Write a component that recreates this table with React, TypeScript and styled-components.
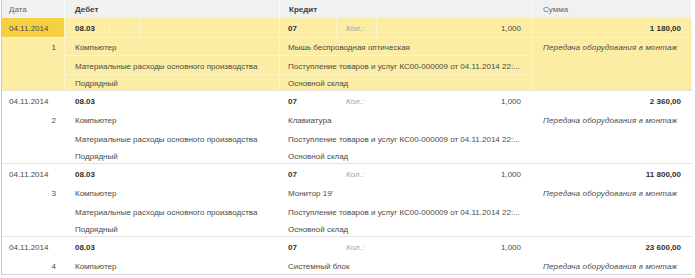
import React from "react";
import styled, { createGlobalStyle, css } from "styled-components";

const Global = createGlobalStyle`
  html, body { margin: 0; padding: 0; background: #ffffff; }
  body { font-family: "Liberation Sans", Arial, sans-serif; }
`;

const LINE_SEL = "#fcf3c6";

const Table = styled.div`
  margin-left: 1px;
  width: 691px;
  height: 275px;
  box-sizing: border-box;
  border-left: 1px solid #c9c9c9;
  border-bottom: 1px solid #d2d2d2;
  overflow: hidden;
  font-size: 8px;
  color: #4a4a4a;
`;

const COLS = "63px 45px 31px 139px 57px 40px 155px 1fr";

const Header = styled.div`
  display: grid;
  grid-template-columns: ${COLS};
  height: 18px;
  background: #f1f1f1;
`;

const HeadCell = styled.div<{ $span: string; $bold?: boolean; $pad: number }>`
  grid-column: ${(p) => p.$span};
  display: flex;
  align-items: center;
  padding-left: ${(p) => p.$pad}px;
  padding-top: 1px;
  box-sizing: border-box;
  border-right: 1px solid #fafafa;
  color: ${(p) => (p.$bold ? "#3c3c3c" : "#666666")};
  font-weight: ${(p) => (p.$bold ? 700 : 400)};
  white-space: nowrap;
`;

const Group = styled.div<{ $selected?: boolean }>`
  display: grid;
  grid-template-columns: ${COLS};
  grid-template-rows: 19px 18px 19px 16px;
  border-bottom: 1px solid #e2e2e2;
  background: ${(p) => (p.$selected ? "#fbeda3" : "#ffffff")};
`;

type CellProps = {
  $col: string;
  $row: string;
  $sel?: boolean;
  $align?: "left" | "right";
  $pl?: number;
  $pr?: number;
  $bold?: boolean;
  $italic?: boolean;
  $muted?: boolean;
  $top?: boolean;
  $current?: boolean;
  $valign?: "center" | "start";
};

const Cell = styled.div<CellProps>`
  grid-column: ${(p) => p.$col};
  grid-row: ${(p) => p.$row};
  display: flex;
  align-items: ${(p) => (p.$valign === "start" ? "flex-start" : "center")};
  justify-content: ${(p) => (p.$align === "right" ? "flex-end" : "flex-start")};
  box-sizing: border-box;
  padding-left: ${(p) => p.$pl ?? 10}px;
  padding-right: ${(p) => p.$pr ?? 8}px;
  padding-top: ${(p) => (p.$valign === "start" ? 5 : 2)}px;
  white-space: nowrap;
  overflow: hidden;
  min-width: 0;
  border-right: 1px solid ${(p) => (p.$sel ? LINE_SEL : "transparent")};
  ${(p) =>
    p.$top &&
    css`
      border-top: 1px solid ${p.$sel ? LINE_SEL : "transparent"};
    `}
  background: ${(p) => (p.$current ? "#f5d043" : "transparent")};
  font-weight: ${(p) => (p.$bold ? 700 : 400)};
  font-style: ${(p) => (p.$italic ? "italic" : "normal")};
  letter-spacing: ${(p) => (p.$italic && !p.$muted ? "0.15px" : "normal")};
  color: ${(p) => (p.$muted ? "#a3a3a3" : p.$bold ? "#2f2f2f" : "#4a4a4a")};
`;

type Entry = {
  date: string;
  n: number;
  debAcc: string;
  debSub: [string, string, string];
  credAcc: string;
  qty: string;
  credSub: [string, string, string];
  sum: string;
  comment: string;
  selected?: boolean;
};

const common = {
  date: "04.11.2014",
  debAcc: "08.03",
  credAcc: "07",
  qty: "1,000",
  comment: "Передача оборудования в монтаж",
};

const doc = "Поступление товаров и услуг КС00-000009 от 04.11.2014 22:...";
const debit: [string, string, string] = [
  "Компьютер",
  "Материальные расходы основного производства",
  "Подрядный",
];

const entries: Entry[] = [
  {
    ...common,
    n: 1,
    debSub: debit,
    credSub: ["Мышь беспроводная оптическая", doc, "Основной склад"],
    sum: "1 180,00",
    selected: true,
  },
  {
    ...common,
    n: 2,
    debSub: debit,
    credSub: ["Клавиатура", doc, "Основной склад"],
    sum: "2 360,00",
  },
  {
    ...common,
    n: 3,
    debSub: debit,
    credSub: ["Монитор 19'", doc, "Основной склад"],
    sum: "11 800,00",
  },
  {
    ...common,
    n: 4,
    debSub: debit,
    credSub: ["Системный блок", doc, "Основной склад"],
    sum: "23 600,00",
  },
];

const Row: React.FC<{ e: Entry }> = ({ e }) => {
  const s = !!e.selected;
  return (
    <Group $selected={s}>
      <Cell $col="1" $row="1" $sel={s} $pl={7} $current={s}>
        {e.date}
      </Cell>
      <Cell $col="1" $row="2 / 5" $sel={s} $top $align="right" $pr={8} $valign="start">
        {e.n}
      </Cell>

      <Cell $col="2" $row="1" $sel={s} $bold>
        {e.debAcc}
      </Cell>
      <Cell $col="3" $row="1" $sel={s} />
      <Cell $col="4" $row="1" $sel={s} />
      {e.debSub.map((t, i) => (
        <Cell key={i} $col="2 / 5" $row={String(i + 2)} $sel={s} $top>
          {t}
        </Cell>
      ))}

      <Cell $col="5" $row="1" $sel={s} $pl={8} $bold>
        {e.credAcc}
      </Cell>
      <Cell $col="6" $row="1" $sel={s} $pl={9} $italic $muted>
        Кол.:
      </Cell>
      <Cell $col="7" $row="1" $sel={s} $align="right" $pr={10}>
        {e.qty}
      </Cell>
      {e.credSub.map((t, i) => (
        <Cell key={i} $col="5 / 8" $row={String(i + 2)} $sel={s} $pl={8} $top>
          {t}
        </Cell>
      ))}

      <Cell $col="8" $row="1" $sel={s} $align="right" $pr={10} $bold>
        {e.sum}
      </Cell>
      <Cell $col="8" $row="2 / 5" $sel={s} $pl={11} $top $italic $valign="start">
        {e.comment}
      </Cell>
    </Group>
  );
};

export default function App() {
  return (
    <>
      <Global />
      <Table>
        <Header>
          <HeadCell $span="1" $pad={7}>
            Дата
          </HeadCell>
          <HeadCell $span="2 / 5" $pad={10} $bold>
            Дебет
          </HeadCell>
          <HeadCell $span="5 / 8" $pad={9} $bold>
            Кредит
          </HeadCell>
          <HeadCell $span="8" $pad={11}>
            Сумма
          </HeadCell>
        </Header>
        {entries.map((e) => (
          <Row key={e.n} e={e} />
        ))}
      </Table>
    </>
  );
}
